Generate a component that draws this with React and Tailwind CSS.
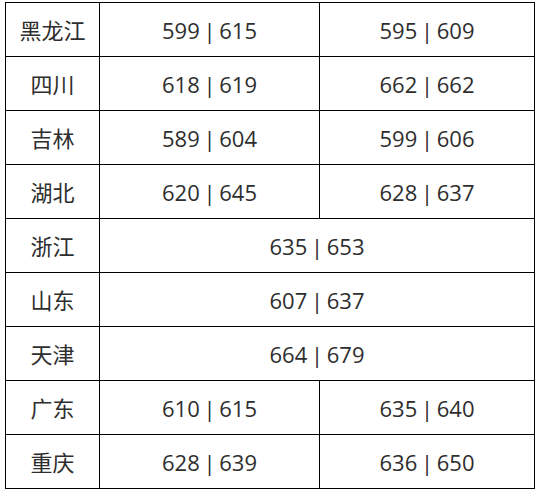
const rows = [
  ['黑龙江', '599 | 615', '595 | 609'],
  ['四川', '618 | 619', '662 | 662'],
  ['吉林', '589 | 604', '599 | 606'],
  ['湖北', '620 | 645', '628 | 637'],
  ['浙江', '635 | 653'],
  ['山东', '607 | 637'],
  ['天津', '664 | 679'],
  ['广东', '610 | 615', '635 | 640'],
  ['重庆', '628 | 639', '636 | 650'],
]

export default function App() {
  return (
    <div className="min-h-screen bg-white pl-[5px] pt-[2px]"
      style={{ fontFamily: '"Open Sans", "Noto Sans CJK SC", sans-serif' }}>
      <table className="border-collapse table-fixed w-[529px] text-[22px] text-[#2e2e2e] [word-spacing:-2px]">
        <colgroup>
          <col className="w-[94px]" />
          <col className="w-[220px]" />
          <col className="w-[215px]" />
        </colgroup>
        <tbody>
          {rows.map(([name, a, b]) => (
            <tr key={name} className="h-[54px]">
              <td className="border border-black text-center p-0 leading-none">{name}</td>
              {b ? (
                <>
                  <td className="border border-black text-center p-0 leading-none">{a}</td>
                  <td className="border border-black text-center p-0 leading-none">{b}</td>
                </>
              ) : (
                <td colSpan={2} className="border border-black text-center p-0 leading-none">{a}</td>
              )}
            </tr>
          ))}
        </tbody>
      </table>
    </div>
  )
}
